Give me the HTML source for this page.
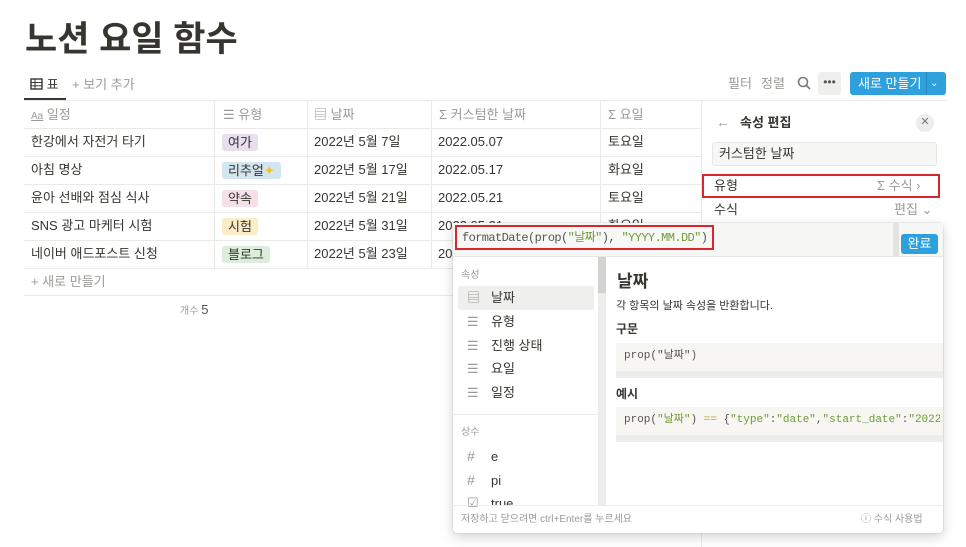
<!DOCTYPE html>
<html><head><meta charset="utf-8"><style>
*{box-sizing:border-box;margin:0;padding:0}
body{width:966px;height:547px;overflow:hidden;background:#fff;font-family:"Liberation Sans","Noto Sans CJK KR",sans-serif;color:#37352f;position:relative;font-size:13px}
.a{position:absolute;white-space:nowrap;line-height:16px}
.g{color:#9b9a97}
.hl{position:absolute;height:1px;background:#e9e9e7}
.vl{position:absolute;width:1px;background:#e9e9e7}
.tag{position:absolute;padding:0 6px;height:17px;line-height:17px;border-radius:3px;font-size:13px}
.mono{font-family:"Liberation Mono","Noto Sans CJK KR",monospace}
.gr{color:#6f9b3a}
</style></head><body>
<div class="a" style="left:25px;top:20px;font-size:35px;line-height:40px;font-weight:bold;color:#37352f">노션 요일 함수</div>

<div class="a" style="left:30px;top:77px;font-size:13px">
<svg width="13" height="12" style="vertical-align:-1px"><rect x="1" y="1" width="11" height="10" fill="none" stroke="#37352f" stroke-width="1.4"/><line x1="1" y1="4.5" x2="12" y2="4.5" stroke="#37352f"/><line x1="1" y1="7.8" x2="12" y2="7.8" stroke="#37352f"/><line x1="5" y1="1" x2="5" y2="11" stroke="#37352f"/></svg> 표</div>
<div class="a g" style="left:72px;top:77px">+ 보기 추가</div>
<div class="a" style="left:24px;top:98px;width:42px;height:2px;background:#37352f"></div>
<div class="hl" style="left:24px;top:100px;width:922px"></div>

<div class="a g" style="left:728px;top:76px">필터</div>
<div class="a g" style="left:761px;top:76px">정렬</div>
<svg class="a" style="left:797px;top:76px" width="14" height="14"><circle cx="6" cy="6" r="4.5" fill="none" stroke="#777" stroke-width="1.6"/><line x1="9.5" y1="9.5" x2="13" y2="13" stroke="#777" stroke-width="1.6"/></svg>
<div class="a" style="left:818px;top:72px;width:23px;height:23px;background:#efefee;border-radius:3px;text-align:center;line-height:20px;color:#555;font-size:12px">•••</div>
<div class="a" style="left:850px;top:72px;width:96px;height:23px;background:#2ea1dc;border-radius:3px;color:#fff;font-size:13px;line-height:23px;padding-left:8px">새로 만들기</div>
<div class="a" style="left:926px;top:72px;width:1px;height:23px;background:#258ac0"></div>
<div class="a" style="left:930px;top:72px;color:#fff;line-height:23px;font-size:10px">⌄</div>

<div class="hl" style="left:24px;top:128px;width:677px"></div>
<div class="hl" style="left:24px;top:156px;width:677px"></div>
<div class="hl" style="left:24px;top:184px;width:677px"></div>
<div class="hl" style="left:24px;top:212px;width:677px"></div>
<div class="hl" style="left:24px;top:240px;width:430px"></div>
<div class="hl" style="left:24px;top:268px;width:430px"></div>
<div class="hl" style="left:24px;top:295px;width:430px"></div>
<div class="vl" style="left:214px;top:100px;height:168px"></div>
<div class="vl" style="left:307px;top:100px;height:168px"></div>
<div class="vl" style="left:431px;top:100px;height:168px"></div>
<div class="vl" style="left:600px;top:100px;height:124px"></div>
<div class="vl" style="left:701px;top:100px;height:447px"></div>

<div class="a g" style="left:31px;top:107px"><span style="font-size:10px;text-decoration:underline">Aa</span> 일정</div>
<div class="a g" style="left:223px;top:107px">☰ 유형</div>
<div class="a g" style="left:314px;top:107px">▤ 날짜</div>
<div class="a g" style="left:439px;top:107px">Σ 커스텀한 날짜</div>
<div class="a g" style="left:608px;top:107px">Σ 요일</div>

<div class="a" style="left:31px;top:134px">한강에서 자전거 타기</div>
<div class="a" style="left:31px;top:162px">아침 명상</div>
<div class="a" style="left:31px;top:190px">윤아 선배와 점심 식사</div>
<div class="a" style="left:31px;top:218px">SNS 광고 마케터 시험</div>
<div class="a" style="left:31px;top:246px">네이버 애드포스트 신청</div>

<div class="tag" style="left:222px;top:134px;background:#e8deee">여가</div>
<div class="tag" style="left:222px;top:162px;background:#d3e5ef">리추얼<span style="color:#f5c518">✦</span></div>
<div class="tag" style="left:222px;top:190px;background:#f5e0e9">약속</div>
<div class="tag" style="left:222px;top:218px;background:#fdecc8">시험</div>
<div class="tag" style="left:222px;top:246px;background:#dbeddb">블로그</div>

<div class="a" style="left:314px;top:134px">2022년 5월 7일</div>
<div class="a" style="left:314px;top:162px">2022년 5월 17일</div>
<div class="a" style="left:314px;top:190px">2022년 5월 21일</div>
<div class="a" style="left:314px;top:218px">2022년 5월 31일</div>
<div class="a" style="left:314px;top:246px">2022년 5월 23일</div>
<div class="a" style="left:438px;top:134px">2022.05.07</div>
<div class="a" style="left:438px;top:162px">2022.05.17</div>
<div class="a" style="left:438px;top:190px">2022.05.21</div>
<div class="a" style="left:438px;top:218px">2022.05.31</div>
<div class="a" style="left:438px;top:246px">2022.05.23</div>
<div class="a" style="left:608px;top:134px">토요일</div>
<div class="a" style="left:608px;top:162px">화요일</div>
<div class="a" style="left:608px;top:190px">토요일</div>
<div class="a" style="left:608px;top:218px">화요일</div>
<div class="a g" style="left:31px;top:274px">+ 새로 만들기</div>
<div class="a g" style="left:180px;top:302px;font-size:10px">개수 <span style="font-size:13px;color:#555">5</span></div>

<div class="a g" style="left:716px;top:114px;font-size:14px">←</div>
<div class="a" style="left:740px;top:115px;font-weight:bold">속성 편집</div>
<div class="a" style="left:916px;top:114px;width:18px;height:18px;border-radius:9px;background:#ededec;text-align:center;line-height:17px;color:#777;font-size:11px">✕</div>
<div class="a" style="left:712px;top:142px;width:225px;height:24px;background:#f7f7f5;border:1px solid #e6e6e4;border-radius:3px;padding:3px 6px">커스텀한 날짜</div>
<div class="a" style="left:702px;top:174px;width:238px;height:24px;border:2px solid #d9262c"></div>
<div class="a" style="left:714px;top:178px">유형</div>
<div class="a g" style="left:877px;top:178px">Σ 수식 ›</div>
<div class="a" style="left:714px;top:202px">수식</div>
<div class="a g" style="left:894px;top:202px">편집 ⌄</div>

<div class="a" style="left:453px;top:223px;width:490px;height:310px;background:#fff;border-radius:4px;box-shadow:0 0 0 1px rgba(15,15,15,.06),0 4px 12px rgba(15,15,15,.18)"></div>
<div class="a" style="left:453px;top:223px;width:490px;height:34px;background:#f7f7f5;border-bottom:1px solid #e6e6e4"></div>
<div class="a" style="left:893px;top:223px;width:6px;height:34px;background:#e3e3e1"></div>
<div class="a" style="left:455px;top:225px;width:259px;height:25px;border:2px solid #d9262c"></div>
<div class="a mono" style="left:462px;top:230px;font-size:12px;letter-spacing:-0.6px;color:#555">formatDate(prop(<span class="gr">"날짜"</span>), <span class="gr">"YYYY.MM.DD"</span>)</div>
<div class="a" style="left:901px;top:234px;width:37px;height:20px;background:#2ea1dc;border-radius:3px;color:#fff;text-align:center;line-height:20px">완료</div>

<div class="a" style="left:598px;top:257px;width:8px;height:248px;background:#ededec"></div>
<div class="a" style="left:598px;top:257px;width:8px;height:36px;background:#d3d3d1"></div>
<div class="a g" style="left:461px;top:268px;font-size:10px">속성</div>
<div class="a" style="left:458px;top:286px;width:136px;height:24px;background:#efefee;border-radius:3px"></div>
<div class="a g" style="left:467px;top:290px">▤</div><div class="a" style="left:491px;top:290px">날짜</div>
<div class="a g" style="left:467px;top:314px">☰</div><div class="a" style="left:491px;top:314px">유형</div>
<div class="a g" style="left:467px;top:338px">☰</div><div class="a" style="left:491px;top:338px">진행 상태</div>
<div class="a g" style="left:467px;top:361px">☰</div><div class="a" style="left:491px;top:361px">요일</div>
<div class="a g" style="left:467px;top:385px">☰</div><div class="a" style="left:491px;top:385px">일정</div>
<div class="hl" style="left:453px;top:414px;width:145px"></div>
<div class="a g" style="left:461px;top:425px;font-size:10px">상수</div>
<div class="a g" style="left:467px;top:448px;font-size:14px">#</div><div class="a" style="left:491px;top:449px">e</div>
<div class="a g" style="left:467px;top:472px;font-size:14px">#</div><div class="a" style="left:491px;top:473px">pi</div>
<div class="a g" style="left:467px;top:495px">☑</div><div class="a" style="left:491px;top:496px;height:9px;overflow:hidden">true</div>

<div class="a" style="left:617px;top:272px;font-size:17px;line-height:20px;font-weight:bold">날짜</div>
<div class="a" style="left:616px;top:298px;font-size:11px">각 항목의 날짜 속성을 반환합니다.</div>
<div class="a" style="left:616px;top:321px;font-size:12px;font-weight:bold">구문</div>
<div class="a" style="left:616px;top:343px;width:327px;height:35px;background:#f7f6f3;border-bottom:7px solid #ededeb"></div>
<div class="a mono" style="left:624px;top:348px;font-size:11px;color:#555">prop("날짜")</div>
<div class="a" style="left:616px;top:386px;font-size:12px;font-weight:bold">예시</div>
<div class="a" style="left:616px;top:407px;width:327px;height:35px;background:#f7f6f3;border-bottom:7px solid #ededeb;overflow:hidden"></div>
<div class="a mono" style="left:624px;top:412px;font-size:11px;color:#555;width:316px;overflow:hidden">prop(<span class="gr">"날짜"</span>) <span style="color:#c5a516">==</span> {<span class="gr">"type"</span>:<span class="gr">"date"</span>,<span class="gr">"start_date"</span>:<span class="gr">"2022</span></div>

<div class="hl" style="left:453px;top:505px;width:490px;background:#ededec"></div>
<div class="a g" style="left:461px;top:512px;font-size:10px">저장하고 닫으려면 ctrl+Enter를 누르세요</div>
<div class="a g" style="left:861px;top:512px;font-size:10px">ⓘ 수식 사용법</div>
</body></html>
